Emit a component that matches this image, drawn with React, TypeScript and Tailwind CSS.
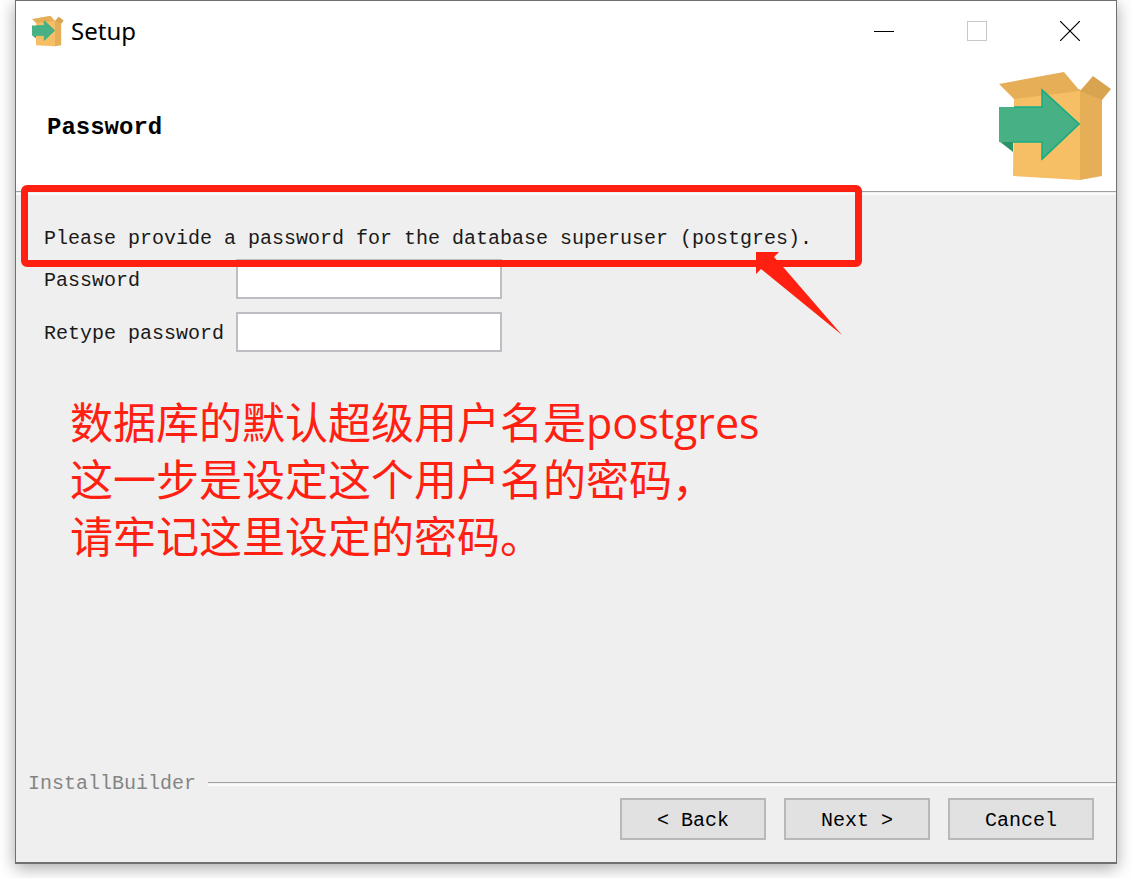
import type { ReactNode } from "react";

const BoxLogo = ({ className }: { className: string }) => (
  <svg viewBox="0 0 113 110" className={className} aria-hidden="true">
    <polygon points="15,26 81,18 81,109 14,105" fill="#f6be65" />
    <polygon points="81,19 103,27 103,105 81,109" fill="#e7ae58" />
    <polygon points="0,13 65,1 81,20 15,28" fill="#e7ae58" />
    <polygon points="81,20 94,5 112,18 103,29" fill="#d9a450" />
    <polygon points="0,70 14,70 14,81" fill="#2a9468" />
    <polygon points="0,36 43,36 43,18 81,53 43,89 43,71 0,71" fill="#47b085" />
    <polyline
      points="14,71 43,71 43,88 80,53 43,19 43,36 15,36"
      fill="none"
      stroke="#14ad84"
      strokeWidth="1.5"
    />
  </svg>
);

// Etched line used under the header and above the footer buttons.
const Separator = ({ className = "" }: { className?: string }) => (
  <div
    className={`h-1 border-t border-b-2 border-t-[#a0a0a0] border-b-[#fafafa] ${className}`}
  />
);

const CaptionButton = ({
  label,
  disabled,
  children,
}: {
  label: string;
  disabled?: boolean;
  children: ReactNode;
}) => (
  <button
    type="button"
    aria-label={label}
    disabled={disabled}
    className="flex h-full w-[93px] items-center justify-center"
  >
    <svg viewBox="0 0 20 20" className="size-5" fill="none">
      {children}
    </svg>
  </button>
);

const TitleBar = () => (
  <div className="flex h-[60px] items-center bg-white pl-4">
    <BoxLogo className="size-8" />
    <h1 className="ml-[7px] font-['Noto_Sans',sans-serif] text-2xl text-black">
      Setup
    </h1>
    <div className="ml-auto flex h-full">
      <CaptionButton label="Minimize">
        <path d="M0 10.5H20" stroke="#000" />
      </CaptionButton>
      <CaptionButton label="Maximize" disabled>
        <rect x="0.5" y="0.5" width="19" height="19" stroke="#c8c8c8" />
      </CaptionButton>
      <CaptionButton label="Close">
        <path d="M0 0L20 20M20 0L0 20" stroke="#000" strokeWidth="1.2" />
      </CaptionButton>
    </div>
  </div>
);

const fields = [
  { id: "password", label: "Password" },
  { id: "retype", label: "Retype password" },
];

const notes = [
  "数据库的默认超级用户名是postgres",
  "这一步是设定这个用户名的密码，",
  "请牢记这里设定的密码。",
];

const buttons = ["< Back", "Next >", "Cancel"];

const App = () => {
  return (
    <div className="flex min-h-screen flex-col bg-white px-[15px] pb-3.5 font-['Liberation_Mono',monospace] text-xl text-[#1a1a1a]">
      <main className="flex grow flex-col border border-b-2 border-[#707070] bg-[#efefef] shadow-[0_4px_16px_rgba(0,0,0,0.35)]">
        <TitleBar />

        <header className="flex h-[130px] items-center justify-between bg-white pr-1 pl-[31px]">
          <h2 className="pt-1 text-2xl font-bold text-black">Password</h2>
          <BoxLogo className="h-[110px] w-[113px]" />
        </header>
        <Separator />

        <form className="flex grow flex-col">
          <section className="px-7 pt-8">
            <div className="relative">
              <p className="leading-6">
                Please provide a password for the database superuser (postgres).
              </p>
              {/* Red marker around the prompt, with its pointer */}
              <div className="absolute -top-[42px] -left-[23px] h-[82px] w-[841px] rounded-md border-[7px] border-[#ff2012]" />
              <svg
                viewBox="0 0 88 86"
                className="absolute top-6 left-[711px] h-[86px] w-[88px]"
                aria-hidden="true"
              >
                <polygon
                  points="1,1 24,1 19,6 29,17 87,84 6,18 1,23"
                  fill="#ff2012"
                />
              </svg>
            </div>

            <div className="mt-2 flex flex-col gap-[13px]">
              {fields.map((field) => (
                <div key={field.id} className="flex items-center">
                  <label htmlFor={field.id} className="w-48 pt-1">
                    {field.label}
                  </label>
                  <input
                    id={field.id}
                    type="password"
                    className="h-10 w-[266px] border-2 border-[#bdbdc3] bg-white px-2 outline-none"
                  />
                </div>
              ))}
            </div>
          </section>

          <div className="mt-[42px] pl-[54px] font-['Open_Sans','Noto_Sans_CJK_SC',sans-serif] text-[43px] leading-[57px] text-[#ff2012]">
            {notes.map((note) => (
              <p key={note} lang="zh-CN">
                {note}
              </p>
            ))}
          </div>

          <footer className="mt-auto">
            <div className="flex items-center gap-3 pl-3">
              <span className="text-[#858585]">InstallBuilder</span>
              <Separator className="grow" />
            </div>
            <div className="flex justify-end gap-[18px] pr-[22px] pb-[22px]">
              {buttons.map((label) => (
                <button
                  key={label}
                  type="button"
                  className="h-[42px] w-[146px] border-2 border-[#b8b8b8] bg-[#e1e1e1] pt-1 text-black"
                >
                  {label}
                </button>
              ))}
            </div>
          </footer>
        </form>
      </main>
    </div>
  );
};

export default App;
